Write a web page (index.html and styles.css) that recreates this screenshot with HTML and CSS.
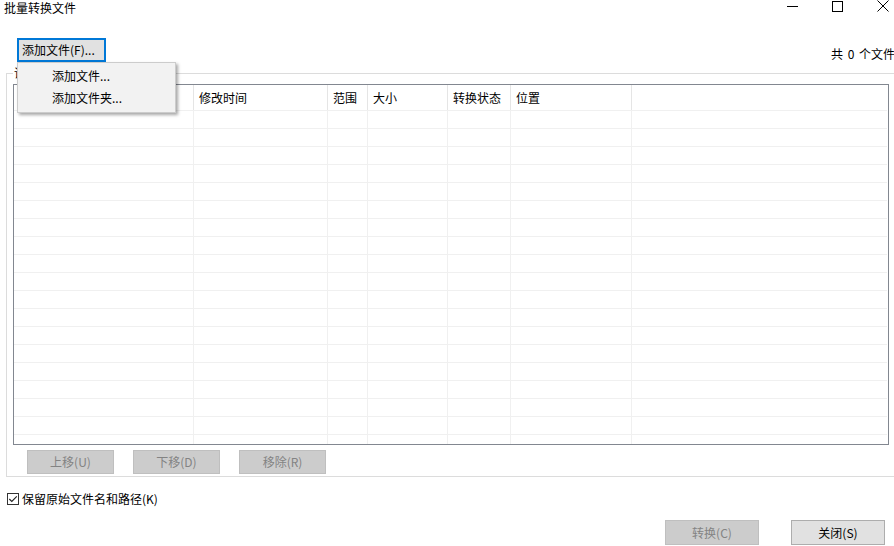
FILE: index.html
```html
<!DOCTYPE html>
<html lang="zh-CN">
<head>
<meta charset="utf-8">
<title>批量转换文件</title>
<link rel="stylesheet" href="styles.css">
</head>
<body>
<div class="window">
  <div class="titlebar">
    <div class="title">批量转换文件</div>
    <div class="controls">
      <svg class="ctl-min" width="11" height="11" viewBox="0 0 11 11"><line x1="0" y1="6.5" x2="11" y2="6.5" stroke="#000" stroke-width="1"/></svg>
      <svg class="ctl-max" width="11" height="11" viewBox="0 0 11 11"><rect x="0.5" y="0.5" width="10" height="10" fill="none" stroke="#000" stroke-width="1"/></svg>
      <svg class="ctl-close" width="12" height="12" viewBox="0 0 12 12"><path d="M0.5 0.5 L11.5 11.5 M11.5 0.5 L0.5 11.5" stroke="#000" stroke-width="1" fill="none"/></svg>
    </div>
  </div>

  <div class="toolbar">
    <div class="add-wrap">
      <button class="btn btn-add">添加文件(F)...</button>
      <div class="menu">
        <div class="menu-item">添加文件...</div>
        <div class="menu-item">添加文件夹...</div>
      </div>
    </div>
    <div class="count">共 0 个文件</div>
  </div>

  <div class="group">
    <div class="group-label">请</div>
    <div class="list">
      <div class="head">
        <div class="hcell"></div>
        <div class="hcell">修改时间</div>
        <div class="hcell">范围</div>
        <div class="hcell">大小</div>
        <div class="hcell">转换状态</div>
        <div class="hcell">位置</div>
        <div class="hcell last"></div>
      </div>
      <div class="body">
        <div class="col"></div>
        <div class="col"></div>
        <div class="col"></div>
        <div class="col"></div>
        <div class="col"></div>
        <div class="col"></div>
        <div class="col last"></div>
      </div>
    </div>
    <div class="list-buttons">
      <button class="btn btn-disabled btn-small">上移(U)</button>
      <button class="btn btn-disabled btn-small">下移(D)</button>
      <button class="btn btn-disabled btn-small">移除(R)</button>
    </div>
  </div>

  <div class="check-row">
    <svg class="checkbox" width="12" height="12" viewBox="0 0 12 12">
      <rect x="0.5" y="0.5" width="11" height="11" fill="#fff" stroke="#333" stroke-width="1"/>
      <path d="M2.3 6 L4.8 8.5 L9.8 3.3" fill="none" stroke="#222" stroke-width="1.1"/>
    </svg>
    <span class="check-label">保留原始文件名和路径(K)</span>
  </div>

  <div class="bottom-buttons">
    <button class="btn btn-disabled btn-large">转换(C)</button>
    <button class="btn btn-normal btn-large">关闭(S)</button>
  </div>
</div>
</body>
</html>
```

FILE: styles.css
```css
html, body {
  margin: 0;
  padding: 0;
  background: #ffffff;
}

body {
  width: 894px;
  height: 546px;
  overflow: hidden;
  font-family: "Noto Sans CJK SC", "Microsoft YaHei", "Noto Sans", sans-serif;
  font-size: 12px;
  color: #000;
}

.window {
  width: 894px;
  height: 546px;
  display: flex;
  flex-direction: column;
  overflow: hidden;
}

.titlebar {
  height: 15px;
  display: flex;
  align-items: flex-start;
  justify-content: space-between;
}

.title {
  padding-left: 4px;
  line-height: 15px;
  font-size: 12px;
}

.controls {
  display: flex;
  align-items: flex-start;
  padding-right: 5px;
}

.ctl-min {
  display: block;
}

.ctl-max {
  display: block;
  margin-left: 34px;
  margin-top: 1px;
}

.ctl-close {
  display: block;
  margin-left: 34px;
}

.toolbar {
  margin-top: 23px;
  height: 24px;
  display: flex;
  justify-content: space-between;
  align-items: center;
}

.add-wrap {
  position: relative;
  margin-left: 17px;
}

.btn {
  font-family: "Noto Sans CJK SC", "Microsoft YaHei", "Noto Sans", sans-serif;
  font-size: 12px;
  line-height: 14px;
  padding: 0;
  margin: 0;
  box-sizing: border-box;
  cursor: default;
}

.btn-add {
  width: 89px;
  height: 24px;
  background: #e1e1e1;
  border: 2px solid #0078d7;
  text-align: left;
  padding-left: 3px;
  color: #000;
}

.menu {
  position: absolute;
  left: 0;
  top: 24px;
  width: 159px;
  height: 51px;
  box-sizing: border-box;
  background: #f2f2f2;
  border: 1px solid #cccccc;
  box-shadow: 2px 2px 3px rgba(0, 0, 0, 0.35);
  padding-top: 2px;
  z-index: 10;
}

.menu-item {
  height: 22px;
  line-height: 22px;
  padding-left: 34px;
}

.count {
  margin-right: -1px;
  margin-top: 8px;
  line-height: 14px;
  white-space: nowrap;
  word-spacing: 2px;
}

.group {
  position: relative;
  margin-top: 11px;
  margin-left: 6px;
  width: 888px;
  height: 404px;
  box-sizing: border-box;
  border: 1px solid #dcdcdc;
  border-right: none;
  padding-top: 10px;
  padding-left: 6px;
}

.group-label {
  position: absolute;
  left: 6px;
  top: -8px;
  background: #fff;
  line-height: 14px;
  padding: 0 1px;
}

.list {
  width: 876px;
  height: 361px;
  box-sizing: border-box;
  border: 1px solid #828790;
  display: flex;
  flex-direction: column;
  background: #fff;
}

.head {
  height: 25px;
  display: grid;
  grid-template-columns: 180px 134px 40px 80px 63px 121px 1fr;
}

.hcell {
  border-right: 1px solid #e5e5e5;
  line-height: 26px;
  padding-left: 5px;
  white-space: nowrap;
  overflow: hidden;
}

.hcell.last {
  border-right: none;
}

.body {
  flex: 1;
  display: grid;
  grid-template-columns: 180px 134px 40px 80px 63px 121px 1fr;
  background-image: repeating-linear-gradient(to bottom, #f0f0f0 0, #f0f0f0 1px, transparent 1px, transparent 18px);
  margin-right: 1px;
}

.col {
  border-right: 1px solid #f0f0f0;
}

.col.last {
  border-right: none;
}

.list-buttons {
  display: flex;
  gap: 19px;
  margin-top: 5px;
  margin-left: 14px;
}

.btn-disabled {
  background: #cccccc;
  border: 1px solid #bfbfbf;
  color: #838383;
}

.btn-normal {
  background: #e1e1e1;
  border: 1px solid #adadad;
  color: #000;
}

.btn-small {
  width: 87px;
  height: 24px;
}

.check-row {
  margin-top: 14px;
  margin-left: 7px;
  height: 16px;
  display: flex;
  align-items: center;
}

.checkbox {
  display: block;
  flex: none;
}

.check-label {
  margin-left: 3px;
  line-height: 16px;
}

.bottom-buttons {
  margin-top: 13px;
  display: flex;
  justify-content: flex-end;
  gap: 32px;
  padding-right: 9px;
}

.btn-large {
  width: 94px;
  height: 25px;
}
```
